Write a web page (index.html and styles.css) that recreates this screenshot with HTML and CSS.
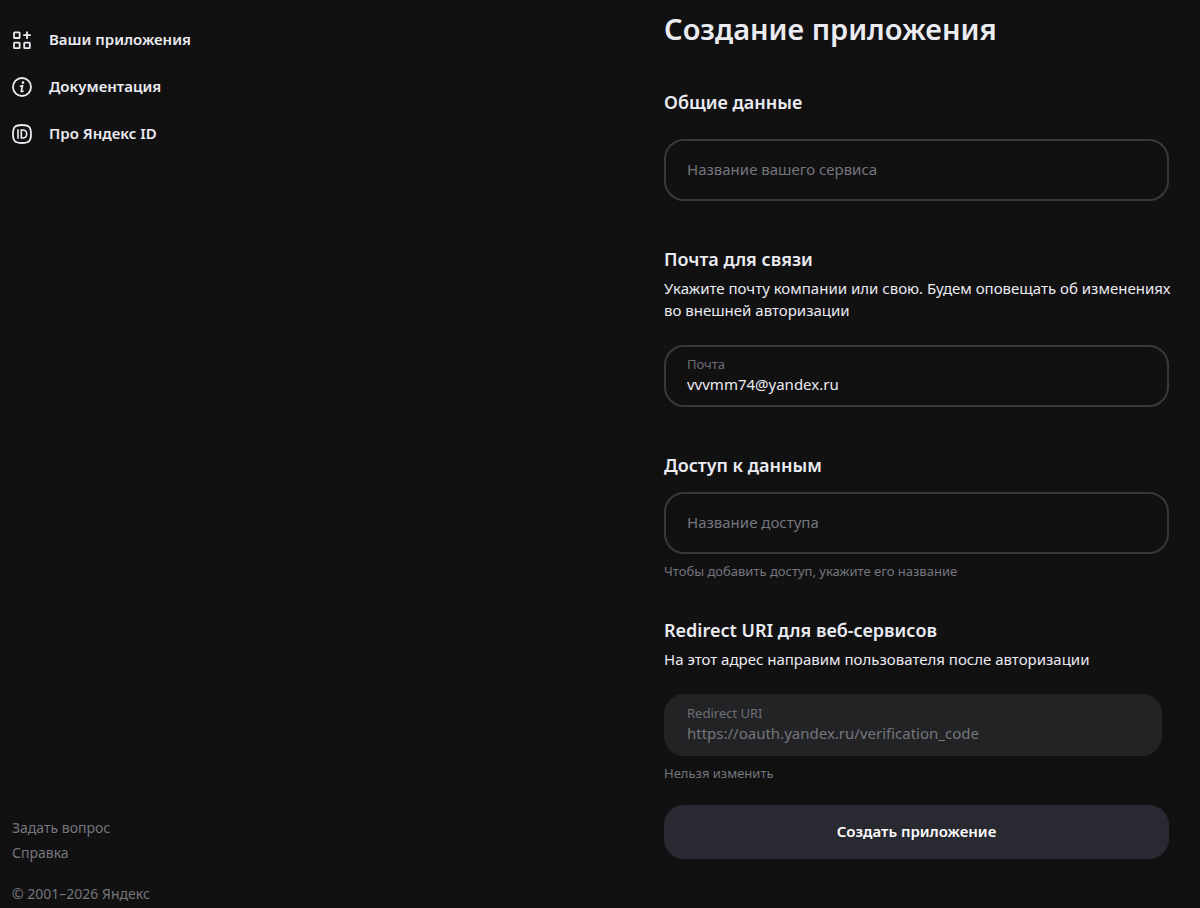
FILE: index.html
```html
<!DOCTYPE html>
<html lang="ru">
  <head>
    <meta charset="UTF-8" />
    <meta name="viewport" content="width=device-width, initial-scale=1.0" />
    <title>Создание приложения</title>
    <link rel="stylesheet" href="styles.css">
  </head>
  <body>
    <div class="page">
      <aside class="sidebar">
        <nav class="menu">
          <a class="menu-link" href="#apps">
            <svg class="menu-icon" viewBox="0 0 20 20" fill="none" stroke="currentColor" stroke-width="1.8" aria-hidden="true">
              <rect x="2" y="2.4" width="5.6" height="5.6" rx="0.6" />
              <rect x="2" y="12.6" width="5.6" height="5.6" rx="0.6" />
              <rect x="12.2" y="12.6" width="5.6" height="5.6" rx="0.6" />
              <path d="M15 1.400v7.600M11.200 5.200h7.600" />
            </svg>
            Ваши приложения
          </a>
          <a class="menu-link" href="#docs">
            <svg class="menu-icon" viewBox="0 0 20 20" fill="none" stroke="currentColor" aria-hidden="true">
              <circle cx="10" cy="10" r="9" stroke-width="1.8" />
              <circle cx="11" cy="5.6" r="1.3" fill="currentColor" stroke="none" />
              <path d="M8.500 9.200l2.100-.6-1.300 5.400c-.1.800.6.700 1.700.2" stroke-width="1.700" stroke-linecap="round" stroke-linejoin="round" />
            </svg>
            Документация
          </a>
          <a class="menu-link" href="#about">
            <svg class="menu-icon" viewBox="0 0 20 20" fill="none" stroke="currentColor" stroke-width="1.8" aria-hidden="true">
              <path d="M10 1c7 0 9 2 9 9s-2 9-9 9-9-2-9-9 2-9 9-9z" />
              <path d="M6 5.200v9.600M9.300 6v8h1.200c2.800 0 4.200-1.500 4.200-4s-1.400-4-4.200-4z" stroke-width="1.600" />
            </svg>
            Про Яндекс ID
          </a>
        </nav>
        <footer class="footer">
          <a class="footer-link" href="#ask">Задать вопрос</a>
          <a class="footer-link" href="#help">Справка</a>
          <p class="copyright">© 2001–2026 Яндекс</p>
        </footer>
      </aside>

      <main class="content">
        <h1 class="title">Создание приложения</h1>
        <form>
          <section class="section">
            <h2 class="section-title">Общие данные</h2>
            <div class="field field-spaced">
              <input class="field-input" type="text" name="title" aria-label="Название вашего сервиса" placeholder="Название вашего сервиса">
            </div>
          </section>

          <section class="section">
            <h2 class="section-title">Почта для связи</h2>
            <p class="section-text">Укажите почту компании или свою. Будем оповещать об изменениях во внешней авторизации</p>
            <div class="field field-spaced">
              <label class="field-label" for="email">Почта</label>
              <input class="field-input" type="email" id="email" name="email" value="vvvmm74@yandex.ru">
            </div>
          </section>

          <section class="section section-hinted">
            <h2 class="section-title">Доступ к данным</h2>
            <div class="field">
              <input class="field-input" type="text" name="scope" aria-label="Название доступа" placeholder="Название доступа">
            </div>
            <p class="hint">Чтобы добавить доступ, укажите его название</p>
          </section>

          <section class="section section-last">
            <h2 class="section-title">Redirect URI для веб-сервисов</h2>
            <p class="section-text">На этот адрес направим пользователя после авторизации</p>
            <div class="field field-spaced field-disabled">
              <label class="field-label" for="redirect">Redirect URI</label>
              <input class="field-input" type="text" id="redirect" name="redirect" value="https://oauth.yandex.ru/verification_code" disabled>
            </div>
            <p class="hint">Нельзя изменить</p>
          </section>

          <button class="submit" type="submit">Создать приложение</button>
        </form>
      </main>
    </div>
  </body>
</html>
```
FILE: styles.css
```css
* {
    box-sizing: border-box;
}

body {
    margin: 0;
    background: #111112;
    color: #ebebf2;
    font-family: "Noto Sans", "Open Sans", sans-serif;
    font-size: 15px;
    line-height: 22px;
}

h1, h2, p {
    margin: 0;
}

a {
    color: inherit;
    text-decoration: none;
}

.page {
    display: flex;
    justify-content: space-between;
    min-height: 100vh;
}

/* Левая колонка */
.sidebar {
    display: flex;
    flex-direction: column;
    justify-content: space-between;
    padding: 28px 12px 4px;
}

.menu {
    display: flex;
    flex-direction: column;
    gap: 25px;
}

.menu-link {
    display: flex;
    align-items: flex-end;
    gap: 17px;
    font-weight: 600;
}

.menu-icon {
    width: 20px;
    height: 20px;
}

.footer {
    display: flex;
    flex-direction: column;
    gap: 5px;
    color: #75757d;
    font-size: 14px;
    line-height: 20px;
}

.copyright {
    margin-top: 16px;
}

.menu-link:hover,
.footer-link:hover {
    color: #ffffff;
}

/* Форма */
.content {
    width: 100%;
    max-width: 536px;
    padding: 9px 31px 48px 0;
}

.title {
    margin-bottom: 40px;
    font-size: 29px;
    line-height: 40px;
    font-weight: 600;
}

.section {
    margin-bottom: 45px;
}

.section-hinted {
    margin-bottom: 36px;
}

.section-last {
    margin-bottom: 22px;
}

.section-title {
    font-size: 18px;
    line-height: 26px;
    font-weight: 600;
}

.section-text {
    margin: 5px -12px 0 0;
}

.field {
    display: flex;
    flex-direction: column;
    justify-content: center;
    height: 62px;
    margin-top: 14px;
    padding: 0 21px 2px;
    border: 2px solid #39393a;
    border-radius: 20px;
}

.field-spaced {
    margin-top: 24px;
}

.field:focus-within {
    border-color: #6b6b75;
}

.field-disabled {
    margin-right: 7px;
    border-color: #222324;
    background: #222324;
}

.field-label {
    color: #6f6f78;
    font-size: 13px;
    line-height: 18px;
}

.field-input {
    width: 100%;
    padding: 0;
    border: none;
    outline: none;
    background: none;
    color: inherit;
    font: inherit;
}

.field-input::placeholder {
    color: #75757d;
    opacity: 1;
}

.field-input:disabled {
    color: #75757d;
}

.hint {
    margin-top: 7px;
    color: #75757d;
    font-size: 13px;
    line-height: 20px;
}

.submit {
    width: 100%;
    height: 54px;
    padding: 0 20px 2px;
    border: none;
    border-radius: 20px;
    background: #292931;
    color: #ffffff;
    font: inherit;
    font-weight: 600;
    cursor: pointer;
}

.submit:hover {
    background: #33333d;
}
```
